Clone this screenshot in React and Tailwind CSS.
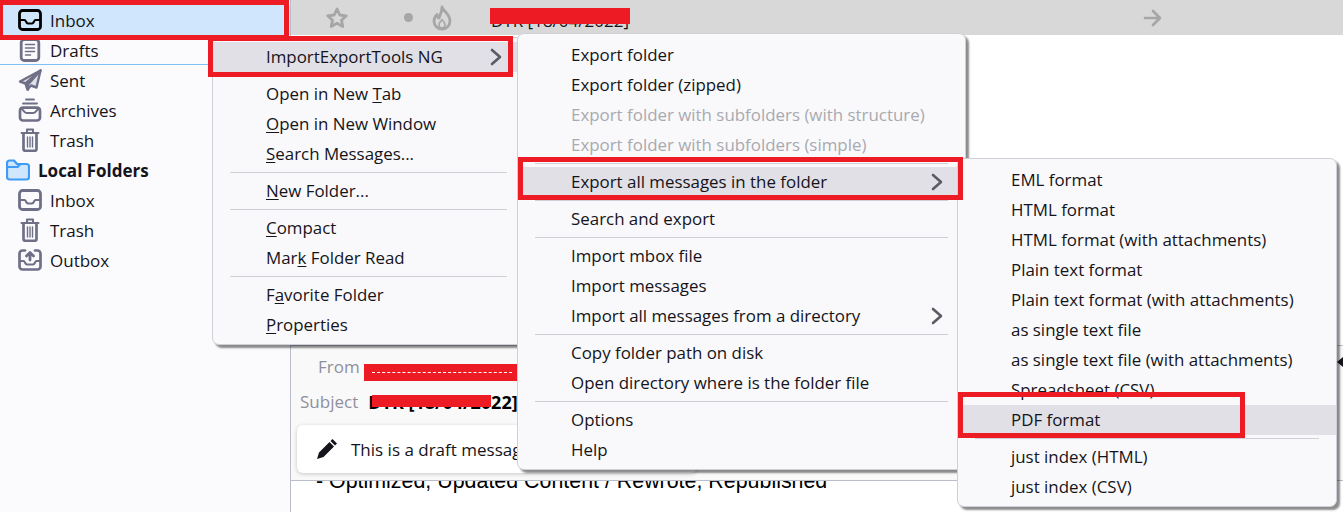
import React from "react";

const FONT = { fontFamily: '"Open Sans", "Noto Sans", sans-serif' };

function Inbox({ c }) {
  return (
    <svg width="24" height="22" viewBox="0 0 24 22" fill="none" stroke={c} strokeWidth="2.800" strokeLinejoin="round" strokeLinecap="round">
      <rect x="1.500" y="1.500" width="21" height="19" rx="3" />
      <path d="M2 11h4.500c1.500 0 1.500 3.500 3.500 3.500h4c2 0 2-3.500 3.500-3.500H22" strokeWidth="2.200" />
    </svg>
  );
}
function Drafts({ c }) {
  return (
    <svg width="24" height="24" viewBox="0 0 24 24" fill="none" stroke={c} strokeLinecap="round">
      <rect x="3.200" y="1.500" width="17.600" height="21" rx="3" strokeWidth="2.800" />
      <path d="M7.500 6.500h9M7.500 10h9M7.500 13.500h9M7.500 17h5" strokeWidth="1.600" />
    </svg>
  );
}
function Sent({ c }) {
  return (
    <svg width="24" height="22" viewBox="0 0 24 22" fill="none" stroke={c} strokeWidth="2.400" strokeLinejoin="round" strokeLinecap="round">
      <path d="M22.500 1.500L2 12.500l5.500 2L9.500 20.500l3.500-4 5.500 2Z" fill={c} fillOpacity="0.18" />
      <path d="M22.500 1.500L7.500 14.500M22.500 1.500L10 15.500v5" />
    </svg>
  );
}
function Archives({ c }) {
  return (
    <svg width="24" height="24" viewBox="0 0 24 24" fill="none" stroke={c} strokeWidth="2.700" strokeLinecap="round" strokeLinejoin="round">
      <path d="M8 1.500h8M5 5.500h14" strokeWidth="1.800" />
      <rect x="2" y="9.700" width="20" height="12.800" rx="3" />
      <path d="M2.500 10.500c3 0 3 4.500 6 4.500h7c3 0 3-4.500 6-4.500" strokeWidth="2.200" />
    </svg>
  );
}
function Trash({ c }) {
  return (
    <svg width="20" height="24" viewBox="0 0 20 24" fill="none" stroke={c} strokeLinecap="round" strokeLinejoin="round">
      <path d="M1.500 5h17M7 4.500V1.500h6v3" strokeWidth="2" />
      <path d="M3.500 5.500v15.500a1.800 1.800 0 0 0 1.800 1.800h9.400a1.800 1.800 0 0 0 1.800-1.800V5.500" strokeWidth="2.700" />
      <path d="M7.500 9v10M10 9v10M12.500 9v10" strokeWidth="1.400" />
    </svg>
  );
}
function Outbox({ c }) {
  return (
    <svg width="24" height="22" viewBox="0 0 24 22" fill="none" stroke={c} strokeWidth="2.700" strokeLinejoin="round" strokeLinecap="round">
      <path d="M7 1.500H4.500a3 3 0 0 0-3 3v13a3 3 0 0 0 3 3h15a3 3 0 0 0 3-3v-13a3 3 0 0 0-3-3H17" />
      <path d="M2 12h3.500c1.500 0 1.500 3.500 3.500 3.500h6c2 0 2-3.500 3.500-3.500H22" strokeWidth="2.200" />
      <path d="M12 11V4M8.500 7l3.500-3.500L15.500 7" strokeWidth="2.800" />
    </svg>
  );
}
function Folder() {
  return (
    <svg width="24" height="22" viewBox="0 0 24 22" fill="#cfe6fc" stroke="#3f9bf5" strokeWidth="2.200" strokeLinejoin="round">
      <path d="M1 4a2.500 2.500 0 0 1 2.500-2.500H8l3 3.500h9.500A2.500 2.500 0 0 1 23 7.500V18a2.500 2.500 0 0 1-2.500 2.500h-17A2.500 2.500 0 0 1 1 18Z" />
      <path d="M1 8h10.500l3-3" fill="none" />
    </svg>
  );
}
function Chevron() {
  return (
    <svg width="12" height="18" viewBox="0 0 12 18" fill="none" stroke="#5b5b66" strokeWidth="2.600" strokeLinecap="round" strokeLinejoin="round">
      <path d="M2 2l8 7-8 7" />
    </svg>
  );
}

const GREY = "#6f7088";
const FOLDERS = [
  { label: "Drafts", icon: <Drafts c={GREY} />, line: true },
  { label: "Sent", icon: <Sent c={GREY} /> },
  { label: "Archives", icon: <Archives c={GREY} /> },
  { label: "Trash", icon: <Trash c={GREY} /> },
];
const LOCAL = [
  { label: "Inbox", icon: <Inbox c={GREY} /> },
  { label: "Trash", icon: <Trash c={GREY} /> },
  { label: "Outbox", icon: <Outbox c={GREY} /> },
];

function FolderRow({ icon, label, line, selected }) {
  return (
    <div
      className={
        "flex h-[30px] items-center text-[17px] text-[#15141a] " +
        (selected ? "bg-[#cfe6fc] " : "") +
        (line ? "shadow-[inset_0_-1px_0_#7cc0f5]" : "")
      }
    >
      <span className="flex w-[50px] justify-center pl-[11px] pr-[1px]">{icon}</span>
      <span className="pt-[1px]">{label}</span>
    </div>
  );
}

function Sep() {
  return (
    <div className="flex h-[7px] items-center px-[17px]">
      <div className="h-px w-full bg-[#cfcfd8]" />
    </div>
  );
}

function Row({ children, arrow, dim, active }) {
  return (
    <div
      className={
        "flex h-[30px] items-center justify-between pl-[53px] pr-[22px] text-[16.900px] whitespace-nowrap " +
        (dim ? "text-[#a9a9b0] " : "text-[#15141a] ") +
        (active ? "bg-[#e0e0e6]" : "")
      }
    >
      <span>{children}</span>
      {arrow && <Chevron />}
    </div>
  );
}

const U = ({ children }) => <u className="underline underline-offset-2 decoration-1">{children}</u>;

const menuCls =
  "absolute rounded-[7px] border border-[#cfcfd8] bg-[#f9f9fb] pb-[4px] shadow-[3px_3px_2px_rgba(0,0,0,0.45)]";

function Red({ className }) {
  return <div className={"absolute border-[5px] border-[#ed1c24] " + className} />;
}

export default function App() {
  return (
    <div className="relative flex h-[512px] w-[1343px] overflow-hidden bg-white" style={FONT}>
      <aside className="w-[291px] shrink-0 border-r border-[#b9bdc9] bg-[#fbfbfe] pt-[5px]">
        <FolderRow icon={<Inbox c="#000000" />} label="Inbox" selected />
        {FOLDERS.map((f, i) => (
          <FolderRow key={i} {...f} />
        ))}
        <div className="flex h-[30px] items-center text-[17px] font-bold text-[#15141a]">
          <span className="flex w-[38px] justify-center pl-[6px] pr-[8px]">
            <Folder />
          </span>
          <span className="pt-[1px]">Local Folders</span>
        </div>
        {LOCAL.map((f, i) => (
          <FolderRow key={i} {...f} />
        ))}
      </aside>

      <main className="flex min-w-0 flex-1 flex-col">
        <div className="flex h-[35px] shrink-0 items-center bg-[#d8d8d8] pl-[34px] text-[#a0a0a0]">
          <svg width="24" height="24" viewBox="0 0 24 24" fill="none" stroke="#a6a6a6" strokeWidth="2.800" strokeLinejoin="round">
            <path d="M12 3l2.800 6 6.500.8-4.800 4.400 1.300 6.400L12 17.300l-5.800 3.300 1.300-6.400-4.800-4.400 6.500-.8Z" />
          </svg>
          <span className="ml-[55px] h-[9px] w-[9px] rounded-full bg-[#a6a6a6]" />
          <svg className="ml-[18px]" width="22" height="26" viewBox="0 0 22 26" fill="none" stroke="#a6a6a6" strokeWidth="2.800" strokeLinecap="round" strokeLinejoin="round">
            <path d="M11 2c1 4 8 7 8 14a8 8 0 0 1-16 0c0-3 1.500-5 3-6.500 0 2 1 3 2 3.500 1-3 3-6 3-11Z" />
            <path d="M11 23c-2 0-3-1.500-3-3.500 0-2 2-3 3-5 1 2 3 3 3 5s-1 3.500-3 3.500Z" strokeWidth="1.600" />
          </svg>
          <span className="relative ml-[38px] translate-y-[3px] text-[17px] text-[#15141a]">
            DTR [18/04/2022]
            <span className="absolute left-[-1px] top-[0px] h-[16px] w-[140px] bg-[#ed1c24]" />
          </span>
          <svg className="ml-[514px]" width="20" height="18" viewBox="0 0 20 18" fill="none" stroke="#a6a6a6" strokeWidth="2.600" strokeLinecap="round" strokeLinejoin="round">
            <path d="M2 9h15M10 2l7 7-7 7" />
          </svg>
        </div>

        <div className="flex-1" />

        <div className="relative h-[136px] shrink-0 border-y border-[#b9bdc9] bg-[#f9f9fa] pl-[6px]">
          <span className="absolute right-0 top-[11px] h-0 w-0 border-y-[5px] border-r-[6px] border-y-transparent border-r-[#15141a]" />
          <div className="flex h-[42px] items-center pl-[21px] text-[17px] text-[#8f8f9d]">
            From
            <span className="relative ml-[4px] inline-block h-[17px] w-[157px] translate-y-[5px] bg-[#ed1c24]">
              <span className="absolute left-[8px] right-[9px] top-[8px] border-t border-dashed border-white" />
            </span>
          </div>
          <div className="flex h-[28px] items-center pl-[3px] text-[17px] text-[#8f8f9d]">
            Subject
            <span className="relative ml-[10px] text-[18px] font-bold text-black">
              DTR [18/04/2022]
              <span className="absolute left-[4px] top-[6px] h-[12px] w-[119px] bg-[#ed1c24]" />
            </span>
          </div>
          <div className="mt-[9px] flex h-[48px] w-[400px] items-center rounded-[6px] bg-white pl-[19px] text-[17px] text-[#15141a] shadow-[0_1px_4px_rgba(0,0,0,0.2)]">
            <svg className="mr-[13px]" width="22" height="22" viewBox="0 0 22 22" fill="#15141a">
              <path d="M16.500 1l4.500 4.500-2 2L14.500 3ZM13.500 4l4.500 4.500L7.500 19 1 21l2-6.500Z" />
            </svg>
            <span className="pt-[2px]">This is a draft message</span>
          </div>
        </div>
        <div
          className="h-[31px] shrink-0 overflow-hidden pl-[25px] text-[21.400px] leading-[1] text-black"
          style={{ fontFamily: '"Liberation Sans", sans-serif' }}
        >
          <div className="mt-[-10px]">- Optimized, Updated Content / Rewrote, Republished</div>
        </div>
      </main>

      <div className={menuCls + " left-[212px] top-[37px] w-[313px] pt-[4px]"}>
        <Row arrow active>ImportExportTools NG</Row>
        <Sep />
        <Row>Open in New <U>T</U>ab</Row>
        <Row><U>O</U>pen in New Window</Row>
        <Row><U>S</U>earch Messages...</Row>
        <Sep />
        <Row><U>N</U>ew Folder...</Row>
        <Sep />
        <Row><U>C</U>ompact</Row>
        <Row>Mar<U>k</U> Folder Read</Row>
        <Sep />
        <Row>F<U>a</U>vorite Folder</Row>
        <Row><U>P</U>roperties</Row>
      </div>

      <div className={menuCls + " left-[517px] top-[33px] w-[449px] pt-[6px]"}>
        <Row>Export folder</Row>
        <Row>Export folder (zipped)</Row>
        <Row dim>Export folder with subfolders (with structure)</Row>
        <Row dim>Export folder with subfolders (simple)</Row>
        <Sep />
        <Row arrow active>Export all messages in the folder</Row>
        <Sep />
        <Row>Search and export</Row>
        <Sep />
        <Row>Import mbox file</Row>
        <Row>Import messages</Row>
        <Row arrow>Import all messages from a directory</Row>
        <Sep />
        <Row>Copy folder path on disk</Row>
        <Row>Open directory where is the folder file</Row>
        <Sep />
        <Row>Options</Row>
        <Row>Help</Row>
      </div>

      <div className={menuCls + " left-[957px] top-[158px] w-[380px] pt-[6px]"}>
        <Row>EML format</Row>
        <Row>HTML format</Row>
        <Row>HTML format (with attachments)</Row>
        <Row>Plain text format</Row>
        <Row>Plain text format (with attachments)</Row>
        <Row>as single text file</Row>
        <Row>as single text file (with attachments)</Row>
        <Row>Spreadsheet (CSV)</Row>
        <Row active>PDF format</Row>
        <Sep />
        <Row>just index (HTML)</Row>
        <Row>just index (CSV)</Row>
      </div>

      <Red className="left-[-2px] top-0 h-[40px] w-[291px]" />
      <Red className="left-[208px] top-[36px] h-[41px] w-[305px]" />
      <Red className="left-[518px] top-[157px] h-[43px] w-[445px]" />
      <Red className="left-[958px] top-[392px] h-[46px] w-[287px]" />
    </div>
  );
}
